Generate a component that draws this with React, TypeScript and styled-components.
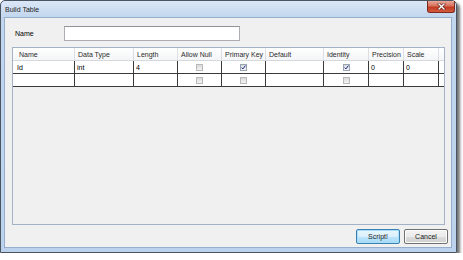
import styled, { createGlobalStyle } from "styled-components"

const GlobalStyle = createGlobalStyle`
  html, body {
    margin: 0;
    padding: 0;
    background: #fff;
  }
  body {
    font-family: "Liberation Sans", Arial, sans-serif;
    font-size: 7px;
    color: #000;
  }
`

// Window chrome
const Window = styled.div`
  width: 457px;
  height: 253px;
  box-sizing: border-box;
  border: 1px solid #4a5563;
  border-radius: 5px 5px 0 0;
  background: linear-gradient(180deg, #dbe7f6 0px, #c2d6ee 16px, #bcd1eb 100%);
  box-shadow: 3px 3px 3px rgba(0, 0, 0, 0.55);
  display: flex;
  flex-direction: column;
`

const TitleBar = styled.div`
  height: 16px;
  display: flex;
  align-items: center;
  justify-content: space-between;
  padding-left: 4px;
`

const Title = styled.span`
  font-size: 7px;
  color: #1e1e1e;
`

const CloseButton = styled.div`
  align-self: flex-start;
  width: 28px;
  height: 12px;
  margin-right: 1px;
  box-sizing: border-box;
  border: 1px solid #7a2a1e;
  border-top: none;
  border-radius: 0 0 3px 3px;
  background: linear-gradient(180deg, #e9a898 0%, #d7705c 45%, #c13a22 55%, #d45a3e 100%);
  display: flex;
  align-items: center;
  justify-content: center;
`

const Client = styled.div`
  flex: 1;
  margin: 0 4px 4px 3px;
  border: 1px solid #94aecd;
  background: #f0f0f0;
  display: flex;
  flex-direction: column;
  padding: 8px 3px 3px 7px;
`

// Form parts
const NameRow = styled.div`
  display: flex;
  align-items: center;
  padding-left: 3px;
  height: 15px;
`

const Label = styled.span`
  width: 49px;
`

const TextInput = styled.div`
  width: 176px;
  height: 15px;
  box-sizing: border-box;
  border: 1px solid #abadb3;
  border-top-color: #8e9198;
  background: #fff;
`

const Grid = styled.div`
  flex: 1;
  margin: 6px 3px 0 0;
  border: 1px solid #a3b2c4;
  background: #f0f0f0;
  display: flex;
  flex-direction: column;
`

const Row = styled.div<{ $header?: boolean }>`
  display: flex;
  height: ${(p) => (p.$header ? "12px" : "12px")};
  border-bottom: 1px solid ${(p) => (p.$header ? "#d5d8dd" : "#3a3a3a")};
  background: ${(p) => (p.$header ? "linear-gradient(180deg, #ffffff, #f4f5f7)" : "#fff")};
`

const Cell = styled.div<{ $w?: number; $header?: boolean; $center?: boolean; $first?: boolean }>`
  width: ${(p) => (p.$w ? `${p.$w}px` : "auto")};
  flex: ${(p) => (p.$w ? "none" : "1")};
  box-sizing: border-box;
  border-right: 1px solid ${(p) => (p.$header ? "#dcdfe3" : "#3a3a3a")};
  display: flex;
  align-items: center;
  justify-content: ${(p) => (p.$center ? "center" : "flex-start")};
  padding-left: ${(p) => (p.$center ? 0 : p.$first ? (p.$header ? 6 : 4) : p.$header ? 3 : 2)}px;
  color: ${(p) => (p.$header ? "#2a2a2a" : "#000")};
  white-space: nowrap;
  overflow: hidden;

  &:last-child {
    border-right: none;
  }
`

const CheckBox = styled.span<{ $checked?: boolean }>`
  width: 7px;
  height: 7px;
  box-sizing: border-box;
  border: 1px solid ${(p) => (p.$checked ? "#9aa3b3" : "#b9b9b9")};
  background: linear-gradient(180deg, #d9d9d9, #f3f3f3);
  display: flex;
  align-items: center;
  justify-content: center;
`

const ButtonRow = styled.div`
  display: flex;
  justify-content: flex-end;
  gap: 4px;
  margin-top: 4px;
`

const Button = styled.div<{ $default?: boolean }>`
  width: 44px;
  height: 15px;
  box-sizing: border-box;
  border: 1px solid ${(p) => (p.$default ? "#3c7fb1" : "#707070")};
  border-radius: 2px;
  background: ${(p) =>
    p.$default
      ? "linear-gradient(180deg, #eaf6fd 0%, #d9f0fc 50%, #bee6fd 50%, #a7d9f5 100%)"
      : "linear-gradient(180deg, #f2f2f2 0%, #ebebeb 50%, #dddddd 50%, #cfcfcf 100%)"};
  box-shadow: inset 0 0 0 1px ${(p) => (p.$default ? "#a6e0f7" : "#fcfcfc")};
  display: flex;
  align-items: center;
  justify-content: center;
  color: #1a1a1a;
`

type Column = { title: string; width?: number; kind: "text" | "check" }

const columns: Column[] = [
  { title: "Name", width: 62, kind: "text" },
  { title: "Data Type", width: 59, kind: "text" },
  { title: "Length", width: 44, kind: "text" },
  { title: "Allow Null", width: 44, kind: "check" },
  { title: "Primary Key", width: 44, kind: "check" },
  { title: "Default", width: 58, kind: "text" },
  { title: "Identity", width: 45, kind: "check" },
  { title: "Precision", width: 35, kind: "text" },
  { title: "Scale", width: 35, kind: "text" },
]

const rows: (string | boolean)[][] = [
  ["Id", "int", "4", false, true, "", true, "0", "0"],
  ["", "", "", false, false, "", false, "", ""],
]

function Check() {
  return (
    <svg width="5" height="5" viewBox="0 0 5 5">
      <path d="M0.6 2.6 L1.9 4 L4.4 0.6" fill="none" stroke="#22348a" strokeWidth="1" />
    </svg>
  )
}

function CloseGlyph() {
  return (
    <svg width="9" height="7" viewBox="0 0 9 7">
      <path d="M2 1 L7 6 M7 1 L2 6" stroke="#5a1a10" strokeWidth="2.6" strokeLinecap="square" />
      <path d="M2 1 L7 6 M7 1 L2 6" stroke="#fff" strokeWidth="1.4" strokeLinecap="square" />
    </svg>
  )
}

export default function App() {
  return (
    <>
      <GlobalStyle />
      <Window>
        <TitleBar>
          <Title>Build Table</Title>
          <CloseButton>
            <CloseGlyph />
          </CloseButton>
        </TitleBar>
        <Client>
          <NameRow>
            <Label>Name</Label>
            <TextInput />
          </NameRow>

          <Grid>
            <Row $header>
              {columns.map((c, i) => (
                <Cell key={c.title} $w={c.width} $header $first={i === 0}>
                  {c.title}
                </Cell>
              ))}
              <Cell $header />
            </Row>
            {rows.map((r, ri) => (
              <Row key={ri}>
                {columns.map((c, i) => (
                  <Cell key={c.title} $w={c.width} $center={c.kind === "check"} $first={i === 0}>
                    {c.kind === "check" ? (
                      <CheckBox $checked={r[i] === true}>{r[i] === true && <Check />}</CheckBox>
                    ) : (
                      (r[i] as string)
                    )}
                  </Cell>
                ))}
                <Cell />
              </Row>
            ))}
          </Grid>

          <ButtonRow>
            <Button $default>Script!</Button>
            <Button>Cancel</Button>
          </ButtonRow>
        </Client>
      </Window>
    </>
  )
}
